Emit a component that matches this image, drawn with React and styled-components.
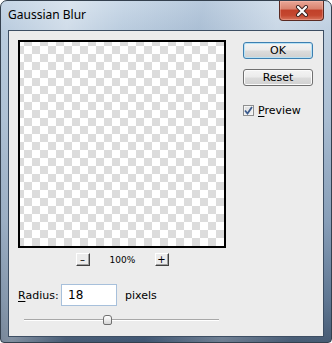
import React from "react";
import styled, { createGlobalStyle } from "styled-components";

const GlobalStyle = createGlobalStyle`
  html, body { margin: 0; padding: 0; background: #ffffff; }
  body { font-family: "DejaVu Sans", Tahoma, sans-serif; }
  * { box-sizing: border-box; }
`;

const Window = styled.div`
  width: 332px;
  height: 343px;
  border: 1px solid #34404e;
  border-radius: 7px 7px 4px 4px;
  padding: 0 7px 5px 7px;
  display: flex;
  flex-direction: column;
  background:
    linear-gradient(100deg,
      rgba(255,255,255,0) 0%,
      rgba(255,255,255,0.35) 18%,
      rgba(255,255,255,0.05) 32%,
      rgba(80,110,150,0.12) 52%,
      rgba(255,255,255,0.25) 72%,
      rgba(255,255,255,0.05) 90%),
    linear-gradient(to bottom,
      #c6d6e6 0px,
      #b7cadd 30px,
      #a3b8ce 120px,
      #8199b4 220px,
      #566f8c 300px,
      #3c516b 343px);
  overflow: hidden;
`;

const TitleBar = styled.div`
  height: 29px;
  flex: none;
  display: flex;
  justify-content: space-between;
  align-items: flex-start;
`;

const Title = styled.span`
  font-family: "Noto Sans", "Segoe UI", sans-serif;
  font-size: 12px;
  line-height: 12px;
  margin-top: 8px;
  color: #000;
`;

const CloseButton = styled.div`
  width: 45px;
  height: 20px;
  border: 1px solid #5a2a22;
  border-top: none;
  border-radius: 0 0 4px 4px;
  background: linear-gradient(to bottom, #e9a797 0%, #d98470 40%, #c1412a 50%, #c4472f 75%, #d7735b 100%);
  box-shadow: inset 0 0 0 1px rgba(255,200,190,0.35);
  display: flex;
  align-items: center;
  justify-content: center;
`;

const Client = styled.div`
  flex: 1;
  border: 1px solid #3d4e63;
  background: #ececec;
  padding: 9px 0 0 9px;
  display: flex;
  flex-direction: column;
`;

const Top = styled.div`
  display: flex;
  align-items: flex-start;
`;

const LeftColumn = styled.div`
  width: 208px;
  display: flex;
  flex-direction: column;
`;

const Preview = styled.div`
  width: 208px;
  height: 208px;
  border: 2px solid #000;
  background-color: #ffffff;
  background-image:
    linear-gradient(45deg, #dcdcdc 25%, transparent 25%, transparent 75%, #dcdcdc 75%),
    linear-gradient(45deg, #dcdcdc 25%, transparent 25%, transparent 75%, #dcdcdc 75%);
  background-size: 16px 16px;
  background-position: -4px -4px, 4px 4px;
`;

const ZoomRow = styled.div`
  margin-top: 5px;
  height: 13px;
  display: flex;
  justify-content: center;
  align-items: center;
  gap: 20px;
`;

const ZoomButton = styled.div`
  width: 14px;
  height: 13px;
  background: #ececec;
  border-top: 1px solid #ffffff;
  border-left: 1px solid #ffffff;
  border-right: 1px solid #404040;
  border-bottom: 1px solid #404040;
  box-shadow: inset -1px -1px 0 #a0a0a0;
  display: flex;
  align-items: center;
  justify-content: center;
  font-size: 10px;
  line-height: 10px;
  color: #000;
`;

const ZoomText = styled.span`
  font-size: 9px;
  color: #000;
  width: 25px;
  text-align: center;
`;

const RightColumn = styled.div`
  margin-left: 17px;
  padding-top: 2px;
  display: flex;
  flex-direction: column;
`;

const Button = styled.div`
  width: 70px;
  height: 17px;
  border-radius: 3px;
  border: 1px solid ${(p) => (p.$default ? "#3c7fb1" : "#707070")};
  background: linear-gradient(to bottom, #f4f4f4 0%, #ebebeb 48%, #dcdcdc 52%, #d0d0d0 100%);
  box-shadow: inset 0 0 0 1px ${(p) => (p.$default ? "#b8e1f4" : "#fbfbfb")};
  display: flex;
  align-items: center;
  justify-content: center;
  font-size: 11px;
  color: #000;
  margin-bottom: ${(p) => p.$gap}px;
`;

const CheckRow = styled.div`
  display: flex;
  align-items: center;
  gap: 4px;
  font-size: 11px;
  color: #000;
`;

const CheckBox = styled.div`
  width: 11px;
  height: 11px;
  border: 1px solid #8e8f8f;
  background: linear-gradient(135deg, #dcdedf 0%, #f2f2f2 100%);
  box-shadow: inset 0 0 0 1px #f4f4f4;
  display: flex;
  align-items: center;
  justify-content: center;
`;

const Underlined = styled.span`
  text-decoration: underline;
  text-underline-offset: 2px;
`;

const RadiusRow = styled.div`
  margin-top: 18px;
  display: flex;
  align-items: center;
  font-size: 11px;
  color: #000;
`;

const Label = styled.span`
  width: 43px;
`;

const Input = styled.div`
  width: 56px;
  height: 22px;
  border: 1px solid #a7c0db;
  background: #fff;
  padding-left: 6px;
  display: flex;
  align-items: center;
  font-size: 12px;
`;

const Unit = styled.span`
  margin-left: 8px;
`;

const Slider = styled.div`
  position: relative;
  margin-top: 9px;
  margin-left: 6px;
  width: 195px;
  height: 10px;
`;

const Track = styled.div`
  position: absolute;
  left: 0;
  right: 0;
  top: 4px;
  height: 2px;
  border-top: 1px solid #a8a8a8;
  border-bottom: 1px solid #ffffff;
  background: #d0d0d0;
`;

const Thumb = styled.div`
  position: absolute;
  top: 0;
  width: 9px;
  height: 10px;
  border: 1px solid #707070;
  border-radius: 3px 3px 2px 2px;
  background: linear-gradient(to bottom, #ffffff 0%, #ececec 50%, #d4d4d4 100%);
`;

export default function App() {
  const value = 0.427;
  return (
    <>
      <GlobalStyle />
      <Window>
        <TitleBar>
          <Title>Gaussian Blur</Title>
          <CloseButton>
            <svg width="14" height="12" viewBox="0 0 14 12">
              <path d="M3 2 L11 10 M11 2 L3 10" stroke="#3a2320" strokeWidth="4" strokeLinecap="round" />
              <path d="M3 2 L11 10 M11 2 L3 10" stroke="#ffffff" strokeWidth="2.2" strokeLinecap="round" />
            </svg>
          </CloseButton>
        </TitleBar>
        <Client>
          <Top>
            <LeftColumn>
              <Preview />
              <ZoomRow>
                <ZoomButton>–</ZoomButton>
                <ZoomText>100%</ZoomText>
                <ZoomButton>+</ZoomButton>
              </ZoomRow>
            </LeftColumn>
            <RightColumn>
              <Button $default $gap={10}>OK</Button>
              <Button $gap={18}>Reset</Button>
              <CheckRow>
                <CheckBox>
                  <svg width="9" height="9" viewBox="0 0 9 9">
                    <path d="M1 4.5 L3.5 7.5 L8 1" stroke="#3b5a8c" strokeWidth="1.8" fill="none" />
                  </svg>
                </CheckBox>
                <span><Underlined>P</Underlined>review</span>
              </CheckRow>
            </RightColumn>
          </Top>
          <RadiusRow>
            <Label><Underlined>R</Underlined>adius:</Label>
            <Input>18</Input>
            <Unit>pixels</Unit>
          </RadiusRow>
          <Slider>
            <Track />
            <Thumb style={{ left: `${value * 195 - 4}px` }} />
          </Slider>
        </Client>
      </Window>
    </>
  );
}
